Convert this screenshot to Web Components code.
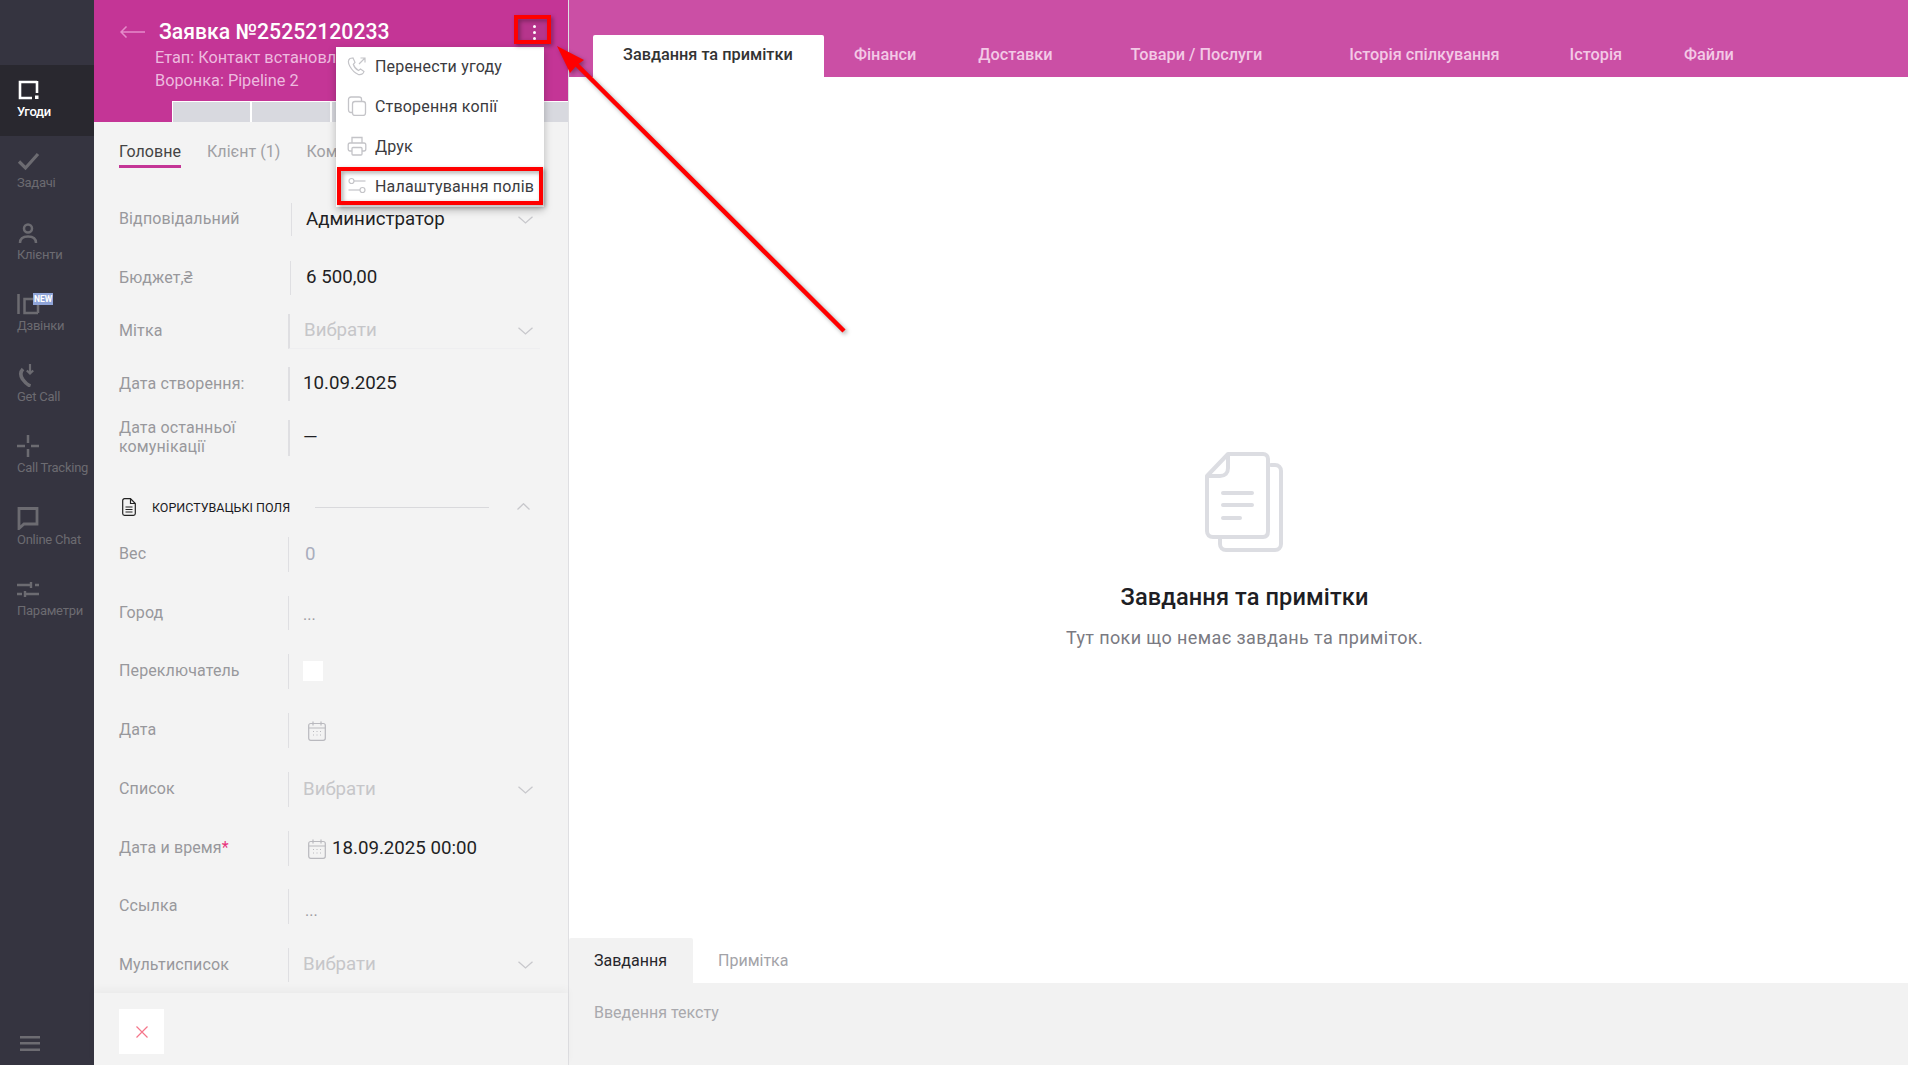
<!DOCTYPE html>
<html lang="uk"><head><meta charset="utf-8"><title>Заявка</title>
<style>
html,body{margin:0;height:100%;overflow:hidden;background:#fff}
body{font-family:Roboto,"Noto Sans",sans-serif}
crm-app{width:1908px;height:1065px}
</style></head><body>
<crm-app>
  <crm-sidebar slot="side">
    <side-item label="Угоди" active><svg viewBox="0 0 24 24" width="24" height="24" fill="none" stroke="#fff" stroke-width="2.6"><path d="M21 4H4V20H16"/><path d="M21 3V15"/><rect x="19" y="17.500" width="3.500" height="3.500" fill="#fff" stroke="none"/></svg></side-item>
    <side-item label="Задачі"><svg viewBox="0 0 24 24" width="24" height="24" fill="none" stroke="#6c6b71" stroke-width="3.200"><path d="M3 12.500L9.500 19L22 5"/></svg></side-item>
    <side-item label="Клієнти"><svg viewBox="0 0 24 24" width="24" height="24" fill="none" stroke="#6c6b71" stroke-width="2.500"><circle cx="12" cy="7.500" r="4"/><path d="M4 22C4 17.500 7 15.500 12 15.500S20 17.500 20 22"/></svg></side-item>
    <side-item label="Дзвінки"><svg viewBox="0 0 24 24" width="24" height="24" fill="none" stroke="#6c6b71" stroke-width="2.500"><path d="M2.500 2V22"/><path d="M22 7H8.500V21H22"/><path d="M22 7V21"/></svg><span class="new" slot="badge">NEW</span></side-item>
    <side-item label="Get Call"><svg viewBox="0 0 24 24" width="24" height="24" fill="none" stroke="#6c6b71" stroke-width="2.500"><path d="M7 6C4 9 4 12 6.500 16C9 19.500 11.500 22 14.500 23" stroke-width="3.600"/><path d="M14 1V10M10.800 7.500L14 10.500L17.200 7.500" stroke-width="2.200"/></svg></side-item>
    <side-item label="Call Tracking"><svg viewBox="0 0 24 24" width="24" height="24" fill="none" stroke="#6c6b71" stroke-width="2.500"><path d="M12 1V9M12 15V23M1 12H9M15 12H23"/></svg></side-item>
    <side-item label="Online Chat"><svg viewBox="0 0 24 24" width="24" height="24" fill="none" stroke="#6c6b71" stroke-width="2.800"><path d="M3 2.500H21V18H8L3 22.500Z"/></svg></side-item>
    <side-item label="Параметри"><svg viewBox="0 0 24 24" width="24" height="24" fill="none" stroke="#6c6b71" stroke-width="2.400"><path d="M1 8H15M19 8H23M15 5V11M1 17H6M10 17H23M9 14V20"/></svg></side-item>
    <svg slot="bottom" viewBox="0 0 20 15" width="20" height="15" fill="#6d6c72"><rect width="20" height="2.500"/><rect y="6" width="20" height="2.500"/><rect y="12.500" width="20" height="2.500"/></svg>
  </crm-sidebar>

  <deal-panel slot="panel">
    <deal-header title-text="Заявка №25252120233" stage="Етап: Контакт встановл" funnel="Воронка: Pipeline 2"></deal-header>
    <panel-tabs><span class="on">Головне</span><span>Клієнт (1)</span><span>Ком</span></panel-tabs>
    <deal-form>
      <form-row label="Відповідальний" style="--mt:35px;--h:33px;--lw:172px;--pl:14px"><span class="v">Администратор</span><ui-chevron></ui-chevron></form-row>
      <form-row label="Бюджет,₴" style="--mt:25px;--h:34px;--lw:171px;--pl:15px"><span class="v">6 500,00</span></form-row>
      <form-row label="Мітка" line style="--mt:19px;--h:35px;--lw:169px;--pl:14px;--bw:2px"><span class="v ph">Вибрати</span><ui-chevron></ui-chevron></form-row>
      <form-row label="Дата створення:" style="--mt:18px;--h:34px;--lw:169px;--pl:13px;--bw:2px"><span class="v">10.09.2025</span></form-row>
      <form-row label="Дата останньої комунікації" style="--mt:19px;--h:36px;--lw:169px;--pl:13px;--bw:2px"><span class="v">—</span></form-row>
      <form-section>КОРИСТУВАЦЬКІ ПОЛЯ</form-section>
      <form-row label="Вес" style="--mt:21px;--h:35px;--lw:169px;--pl:16px"><span class="v soft">0</span></form-row>
      <form-row label="Город" style="--mt:24px;--h:34px;--lw:169px;--pl:14px"><span class="v dots">...</span></form-row>
      <form-row label="Переключатель" style="--mt:24px;--h:35px;--lw:169px;--pl:14px"><span class="box"></span></form-row>
      <form-row label="Дата" style="--mt:24px;--h:35px;--lw:169px;--pl:19px"><ui-calendar></ui-calendar></form-row>
      <form-row label="Список" style="--mt:24px;--h:35px;--lw:169px;--pl:14px"><span class="v ph">Вибрати</span><ui-chevron></ui-chevron></form-row>
      <form-row label="Дата и время" required style="--mt:24px;--h:35px;--lw:169px;--pl:19px"><ui-calendar></ui-calendar><span class="v" style="margin-left:6px">18.09.2025 00:00</span></form-row>
      <form-row label="Ссылка" style="--mt:23px;--h:35px;--lw:169px;--pl:16px"><span class="v dots" style="margin-top:8px">...</span></form-row>
      <form-row label="Мультисписок" style="--mt:24px;--h:34px;--lw:169px;--pl:14px"><span class="v ph">Вибрати</span><ui-chevron></ui-chevron></form-row>
    </deal-form>
    <panel-footer></panel-footer>
    <context-menu>
      <menu-row label="Перенести угоду"><svg viewBox="0 0 20 20" width="20" height="20" fill="none" stroke="#c4c4c8" stroke-width="1.200"><path d="M3 2.500C1 4 1 7 3 10.500S8 17 11 18.300C14 19 16.500 18 17 15.500L13.500 13L11.500 14.500C9.500 13.500 7 10.500 6.300 8.300L8 6.300L6 2Z"/><path d="M12 8L18 2M13.500 2H18V6.500"/></svg></menu-row>
      <menu-row label="Створення копії"><svg viewBox="0 0 20 20" width="20" height="20" fill="none" stroke="#c4c4c8" stroke-width="1.300"><rect x="5.500" y="5.500" width="13" height="14" rx="2.500"/><path d="M5.500 16.500H4C2.500 16.500 1.500 15.500 1.500 14V3.500C1.500 2 2.500 1 4 1H12C13.500 1 14.500 2 14.500 3V5.500"/></svg></menu-row>
      <menu-row label="Друк"><svg viewBox="0 0 20 20" width="20" height="20" fill="none" stroke="#c4c4c8" stroke-width="1.300"><path d="M5 7V1.500H15V7"/><path d="M5 15H3C2 15 1.200 14.200 1.200 13V9C1.200 8 2 7 3 7H17C18 7 18.800 8 18.800 9V13C18.800 14.200 18 15 17 15H15"/><rect x="5" y="11.500" width="10" height="7.500" rx="1"/></svg></menu-row>
      <menu-row label="Налаштування полів"><svg viewBox="0 0 20 20" width="20" height="20" fill="none" stroke="#c4c4c8" stroke-width="1.200"><circle cx="4.500" cy="5" r="2.500"/><path d="M7 5H18.500"/><circle cx="15.500" cy="14" r="2.500"/><path d="M1.500 14H13"/></svg></menu-row>
    </context-menu>
  </deal-panel>

  <main-area slot="main">
    <top-tabs>
      <span class="on">Завдання та примітки</span>
      <span style="margin-left:30px">Фінанси</span>
      <span style="margin-left:62px">Доставки</span>
      <span style="margin-left:78px">Товари / Послуги</span>
      <span style="margin-left:87px">Історія спілкування</span>
      <span style="margin-left:70px">Історія</span>
      <span style="margin-left:62px">Файли</span>
    </top-tabs>
    <empty-state heading="Завдання та примітки" text="Тут поки що немає завдань та приміток."></empty-state>
    <note-composer></note-composer>
  </main-area>

  <note-overlay slot="over"></note-overlay>
</crm-app>

<script>
function def(name, css, html, extra){
  customElements.define(name, class extends HTMLElement{
    constructor(){super();const r=this.attachShadow({mode:'open'});
      const get=(k)=>this.getAttribute(k)||'';
      r.innerHTML='<style>'+css+'</style>'+(typeof html==='function'?html(get,this):html);}
  });
}
const sans='font-family:Roboto,"Noto Sans",sans-serif;';

def('crm-app',`:host{display:flex;position:relative;overflow:hidden;${sans}}`,
  `<slot name="side"></slot><slot name="panel"></slot><slot name="main"></slot><slot name="over"></slot>`);

def('crm-sidebar',`:host{flex:0 0 94px;width:94px;display:flex;flex-direction:column;background:#353440;padding-top:65px;box-sizing:border-box}
  .b{margin-top:auto;padding:0 0 14px 20px;line-height:0}`,
  `<slot></slot><div class="b"><slot name="bottom"></slot></div>`);

def('side-item',`:host{display:block;height:71.300px;box-sizing:border-box;padding:13px 0 0 16px;position:relative;color:#6c6b71;font-size:13px;line-height:16px}
  :host([active]){background:#29282f;color:#fff;font-weight:500}
  .i{height:24px;width:24px;display:block;line-height:0}
  .l{display:block;margin:2px 0 0 1px;white-space:nowrap;letter-spacing:-.25px}
  ::slotted(.new){position:absolute;left:33px;top:14px;width:20px;height:12px;background:#8fa4d8;color:#fff;font-size:8.500px;line-height:12px;font-weight:700;text-align:center}`,
  g=>`<span class="i"><slot></slot></span><slot name="badge"></slot><span class="l">${g('label')}</span>`);

def('deal-panel',`:host{flex:0 0 474px;width:474px;height:1065px;display:flex;flex-direction:column;background:#f3f3f3;border-right:1px solid #dfdfe2;position:relative}`,`<slot></slot>`);

def('deal-header',`:host{display:flex;flex-direction:column;height:122px;background:#c43596;color:#fff;box-sizing:border-box;padding-top:19px;flex:none;position:relative}
  .t{display:flex;align-items:center;height:26px;padding-left:26px}
  .t svg{margin-right:14px}
  h1{margin:0;font-size:21.200px;font-weight:500;line-height:26px;white-space:nowrap}
  .s{padding-left:61px;font-size:16.300px;line-height:23px;color:#edbadf;white-space:nowrap;margin-top:1px}
  .dots{margin-left:auto;width:33px;height:25px;display:flex;flex-direction:column;align-items:center;justify-content:center;gap:3px;margin-right:19px;padding-left:3px;box-sizing:border-box;background:rgba(60,60,60,.1)}
  .dots i{width:3px;height:3px;background:#fff;border-radius:50%}
  .st{margin-top:auto;margin-left:78px;display:flex;gap:2px;height:21px;background:#fff;padding:1px 0 0 1px;box-sizing:border-box}
  .st i{flex:1;background:#d8d9df}`,
  g=>`<div class="t"><svg width="25" height="12" viewBox="0 0 25 12" fill="none" stroke="#e58bca" stroke-width="1.500"><path d="M25 6H1M6.500 .5L1 6L6.500 11.500"/></svg><h1>${g('title-text')}</h1><div class="dots"><i></i><i></i><i></i></div></div>
  <div class="s"><div>${g('stage')}</div><div>${g('funnel')}</div></div>
  <div class="st"><i></i><i></i><i></i><i></i><i></i></div>`);

def('panel-tabs',`:host{display:flex;gap:26px;padding:20px 0 0 25px;height:46px;box-sizing:border-box;font-size:16px;letter-spacing:.05px;line-height:20px;color:#a0a0a4;flex:none;white-space:nowrap}
  ::slotted(span){display:block;height:26px;box-sizing:border-box;border-bottom:3px solid transparent}
  ::slotted(.on){color:#444;border-bottom-color:#c43596}`,`<slot></slot>`);

def('deal-form',`:host{display:block;flex:1;min-height:0;overflow:hidden;padding:0 35px 0 25px}`,`<slot></slot>`);

def('form-row',`:host{display:flex;margin-top:var(--mt);height:var(--h);font-size:16px;letter-spacing:.12px;line-height:19px;color:#98989c}
  .lb{flex:0 0 var(--lw);width:var(--lw);display:flex;align-items:center;padding:0 40px 2px 0;box-sizing:border-box}
  .lb b{color:#e8327c;font-weight:400}
  .val{flex:1;min-width:0;border-left:var(--bw,1px) solid #dfdfe2;padding:0 0 1px var(--pl);display:flex;align-items:center;font-size:18.700px;letter-spacing:0;color:#1f1f24}
  :host([line]) .val{border-bottom:1px solid #eeeef0;margin-right:-7px;padding-right:7px}
  ::slotted(.v){white-space:nowrap}
  ::slotted(.ph){color:#c6c6c9}
  ::slotted(.soft){color:#a9adbd}
  ::slotted(.dots){color:#9b9ba0;font-size:16px;margin-top:4px}
  ::slotted(.box){width:20px;height:20px;background:#fff;display:block}`,
  (g,el)=>`<div class="lb"><span>${g('label')}${el.hasAttribute('required')?'<b>*</b>':''}</span></div><div class="val"><slot></slot></div>`);

def('ui-chevron',`:host{margin-left:auto;display:block;line-height:0;margin-top:1px}`,
  `<svg width="15" height="8" viewBox="0 0 15 8" fill="none" stroke="#c8c8cc" stroke-width="1.300"><path d="M.5 .7L7.500 7L14.500 .7"/></svg>`);

def('ui-calendar',`:host{display:block;line-height:0;flex:none;margin-top:1px}`,
  `<svg width="18" height="20" viewBox="0 0 18 20" fill="none" stroke="#b9b9be" stroke-width="1.200"><rect x=".7" y="2.500" width="16.600" height="16.800" rx="2"/><path d="M.7 7H17.300M5 .5V4.500M13 .5V4.500"/><path d="M5 10.500H6M8.500 10.500H9.500M12 10.500H13M5 14H6M8.500 14H9.500M12 14H13" stroke-width="1.100"/></svg>`);

def('form-section',`:host{display:flex;align-items:center;height:18px;margin-top:42px;font-size:12.500px;color:#1b1b1f;white-space:nowrap;line-height:18px}
  svg{margin:0 16px 0 3px;flex:none}
  .tx{padding-top:2px}
  .l{width:174px;height:0;border-top:1px solid #d9d9dc;margin:0 0 0 25px}
  .c{margin:-1px 0 0 28px;line-height:0}`,
  `<svg width="14" height="18" viewBox="0 0 14 18" fill="none" stroke="#222" stroke-width="1.200"><path d="M8.500 .7H2.500C1.500 .7.700 1.500.700 2.500V15.500C.700 16.500 1.500 17.300 2.500 17.300H11.500C12.500 17.300 13.300 16.500 13.300 15.500V5.500ZM8.500 .7V5.500H13.300M3.500 9H10.500M3.500 11.500H10.500M3.500 14H10.500"/></svg><span class="tx"><slot></slot></span><i class="l"></i><span class="c"><svg style="margin:0" width="13" height="7" viewBox="0 0 13 7" fill="none" stroke="#c8c8cc" stroke-width="1.300"><path d="M.5 6.500L6.500 .7L12.500 6.500"/></svg></span>`);

def('panel-footer',`:host{display:block;height:72px;flex:none;box-sizing:border-box;padding:16px 0 0 25px;background:#f3f3f3;box-shadow:0 -4px 8px rgba(0,0,0,.035);position:relative}
  button{width:45px;height:45px;border:0;background:#fff;padding:0;display:flex;align-items:center;justify-content:center}`,
  `<button aria-label="close"><svg width="12" height="12" viewBox="0 0 12 12" fill="none" stroke="#f5758a" stroke-width="1.200"><path d="M.5 .5L11.500 11.500M11.500 .5L.5 11.500"/></svg></button>`);

def('context-menu',`:host{position:absolute;left:242px;top:47px;width:208px;height:160px;background:#fff;box-shadow:0 3px 8px rgba(0,0,0,.25);display:block;z-index:5}`,`<slot></slot>`);

def('menu-row',`:host{display:flex;align-items:center;height:40px;box-sizing:border-box;padding:0 0 2px 11px;font-size:16px;letter-spacing:.18px;color:#3b3b40;white-space:nowrap}
  .i{width:20px;height:20px;margin-right:8px;line-height:0;flex:none}`,
  g=>`<span class="i"><slot></slot></span><span>${g('label')}</span>`);

def('main-area',`:host{flex:1;min-width:0;height:1065px;display:flex;flex-direction:column;background:#fff}`,`<slot></slot>`);

def('top-tabs',`:host{display:flex;align-items:flex-end;height:77px;flex:none;background:#cb4fa5;padding-left:24px;box-sizing:border-box;font-size:16.300px;font-weight:500;color:#f3c9e6;white-space:nowrap}
  ::slotted(span){height:42px;line-height:39px;display:block}
  ::slotted(.on){width:231px;box-sizing:border-box;padding-left:30px;background:#fff;color:#333;border-radius:2px 2px 0 0}`,`<slot></slot>`);

def('empty-state',`:host{display:flex;flex-direction:column;align-items:center;flex:1;padding:375px 0 0 12px;box-sizing:border-box}
  svg{display:block;margin-right:2px}
  h2{margin:31px 0 0;font-size:23.600px;font-weight:500;line-height:28px;color:#1e1e24;letter-spacing:.1px}
  p{margin:15px 0 0;font-size:18px;line-height:24px;color:#7a7a82;letter-spacing:.38px}`,
  g=>`<svg width="78" height="100" viewBox="0 0 78 100" fill="none" stroke="#dcdde2" stroke-width="4" stroke-linejoin="round" stroke-linecap="round"><path d="M66 13H70C73.500 13 76 15.500 76 19V92C76 95.500 73.500 98 70 98H21C17.500 98 15 95.500 15 92V87"/><path d="M23 2H58C61 2 63 4 63 7V79C63 83 61 85 58 85H8C4.500 85 2 83 2 79V24ZM23 2V16C23 21 20 24 15 24H2"/><path d="M18 41H47M18 53H47M18 66H35"/></svg>
  <h2>${g('heading')}</h2><p>${g('text')}</p>`);

def('note-composer',`:host{display:block;flex:none;height:127px;font-size:16px}
  .t{display:flex;height:45px}
  .t span{display:block;width:124px;box-sizing:border-box;padding-left:25px;line-height:45px;color:#a3a3a8}
  .t .on{background:#f2f2f2;color:#26262b;border-radius:2px 2px 0 0}
  .b{height:82px;background:#f2f2f2;padding:20px 0 0 25px;box-sizing:border-box;color:#a9a9ad;line-height:20px}`,
  `<div class="t"><span class="on">Завдання</span><span>Примітка</span></div><div class="b">Введення тексту</div>`);

def('note-overlay',`:host{position:absolute;left:0;top:0;width:1908px;height:1065px;pointer-events:none;z-index:10}
  svg{display:block}`,
  `<svg width="1908" height="1065" viewBox="0 0 1908 1065" fill="none">
    <g style="filter:drop-shadow(2px 2px 2px rgba(0,0,0,.35))">
      <rect x="516" y="17" width="33" height="25" stroke="#ff0000" stroke-width="4"/>
      <rect x="339" y="169" width="202" height="34" stroke="#ff0000" stroke-width="4"/>
      <path d="M844 331L574 62" stroke="#ff0000" stroke-width="4.500"/>
      <path d="M557 46L584 60L577 65L570 73Z" fill="#ff0000"/>
    </g>
  </svg>`);
</script>
</body></html>
